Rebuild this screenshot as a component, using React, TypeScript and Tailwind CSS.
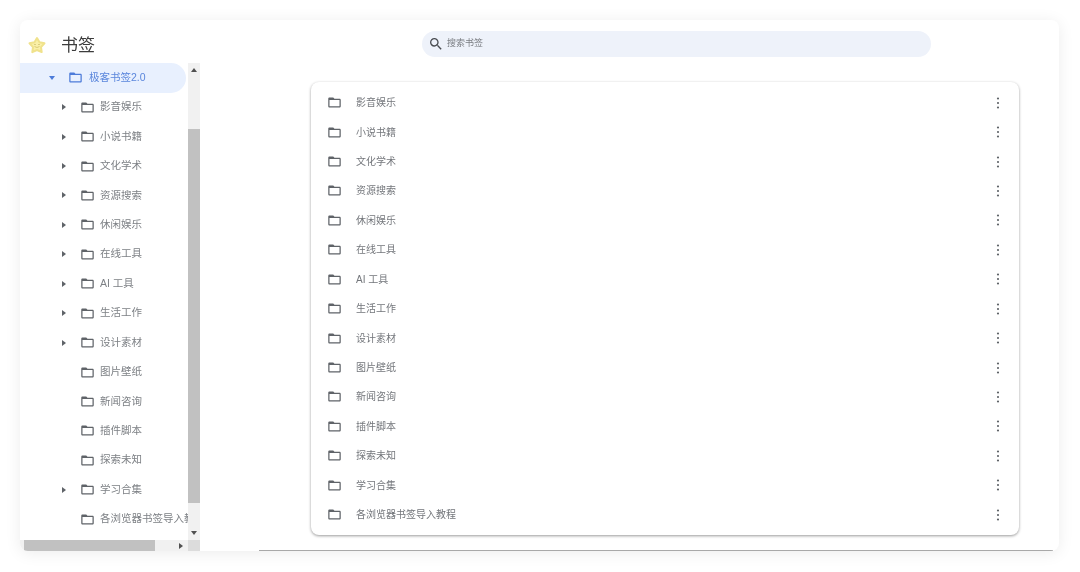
const folders = [
  { name: '影音娱乐', arrow: true },
  { name: '小说书籍', arrow: true },
  { name: '文化学术', arrow: true },
  { name: '资源搜索', arrow: true },
  { name: '休闲娱乐', arrow: true },
  { name: '在线工具', arrow: true },
  { name: 'AI 工具', arrow: true },
  { name: '生活工作', arrow: true },
  { name: '设计素材', arrow: true },
  { name: '图片壁纸', arrow: false },
  { name: '新闻咨询', arrow: false },
  { name: '插件脚本', arrow: false },
  { name: '探索未知', arrow: false },
  { name: '学习合集', arrow: true },
  { name: '各浏览器书签导入教程', arrow: false },
]

const FolderIcon = ({ color = '#5f6368' }: { color?: string }) => (
  <svg width="15" height="15" viewBox="0 0 24 24" fill={color} className="shrink-0">
    <path d="M20 6h-8l-2-2H4c-1.100 0-2 .9-2 2v12c0 1.100.9 2 2 2h16c1.100 0 2-.9 2-2V8c0-1.100-.9-2-2-2zm0 12H4V8h16v10z" />
  </svg>
)

const Star = () => (
  <svg width="20" height="19" viewBox="0 0 20 19">
    <path
      d="M10 2l2.500 4.300 5 1-3.500 3.800.7 5L10 14l-4.700 2.100.7-5-3.500-3.800 5-1z"
      fill="#faf0a8"
      stroke="#f0e28c"
      strokeWidth="2"
      strokeLinejoin="round"
    />
    <circle cx="8" cy="8.500" r=".6" fill="#b5a44e" />
    <circle cx="12" cy="8.500" r=".6" fill="#b5a44e" />
    <path d="M7.500 10.500q2.500 2 5 0" fill="none" stroke="#c4b258" strokeWidth=".6" />
  </svg>
)

const ArrowRight = ({ color = '#5f6368' }: { color?: string }) => (
  <svg width="4" height="6" viewBox="0 0 4 6" fill={color}>
    <path d="M0 0l4 3-4 3z" />
  </svg>
)

const ArrowDown = ({ color = '#505050' }: { color?: string }) => (
  <svg width="6" height="4" viewBox="0 0 6 4" fill={color}>
    <path d="M0 0h6L3 4z" />
  </svg>
)

const ArrowUp = () => (
  <svg width="6" height="4" viewBox="0 0 6 4" fill="#505050">
    <path d="M3 0l3 4H0z" />
  </svg>
)

const MoreIcon = () => (
  <svg width="16" height="16" viewBox="0 0 16 16" fill="#5f6368" className="shrink-0">
    <circle cx="8" cy="3.500" r="1.100" />
    <circle cx="8" cy="8" r="1.100" />
    <circle cx="8" cy="12.500" r="1.100" />
  </svg>
)

const App = () => {
  return (
    <div className="w-[1080px] h-[572px] bg-white pl-[20px] pt-[20px] overflow-hidden font-['Liberation_Sans','Noto_Sans_CJK_SC',sans-serif]">
      <div className="w-[1039px] h-[531px] bg-white rounded-lg shadow-[0_2px_16px_rgba(0,0,0,0.08)] flex flex-col overflow-hidden blur-[0.3px]">
        <div className="h-[43px] flex items-center shrink-0">
          <div className="w-[402px] flex items-center pl-[7px] pt-[7px]">
            <Star />
            <span className="ml-[14px] text-[17px] text-[#3c3c3c] mt-[2px]">书签</span>
          </div>
          <div className="w-[509px] h-[26px] mt-[4px] rounded-full bg-[#eef2fa] flex items-center pl-[6px]">
            <svg width="16" height="16" viewBox="0 0 24 24" fill="#4a4d52">
              <path d="M15.500 14h-.79l-.28-.27A6.471 6.471 0 0 0 16 9.500 6.500 6.500 0 1 0 9.500 16c1.610 0 3.090-.59 4.230-1.570l.27.280v.790l5 4.990L20.490 19l-4.990-5zm-6 0C7.010 14 5 11.990 5 9.500S7.010 5 9.500 5 14 7.010 14 9.500 11.990 14 9.500 14z" />
            </svg>
            <span className="ml-[3px] text-[9px] text-[#7a7d82]">搜索书签</span>
          </div>
        </div>

        <div className="flex flex-1 min-h-0">
          <div className="w-[180px] shrink-0 flex flex-col">
            <div className="flex flex-1 min-h-0">
              <div className="w-[168px] overflow-hidden">
                <div className="w-[166px] h-[29.500px] bg-[#e8f0fe] rounded-r-full flex items-center text-[#5a86dc]">
                  <span className="ml-[29px] w-[19px] flex shrink-0">
                    <ArrowDown color="#4c7bd9" />
                  </span>
                  <FolderIcon color="#4c7bd9" />
                  <span className="ml-[6px] text-[10.500px]">极客书签2.0</span>
                </div>
                {folders.map((f) => (
                  <div key={f.name} className="h-[29.430px] flex items-center whitespace-nowrap">
                    <span className="ml-[42px] w-[18px] flex shrink-0">{f.arrow && <ArrowRight />}</span>
                    <FolderIcon />
                    <span className="ml-[5px] text-[10.500px] text-[#7d8085]">{f.name}</span>
                  </div>
                ))}
              </div>
              <div className="w-[12px] bg-[#f1f1f1] flex flex-col">
                <div className="h-[14px] flex items-center justify-center">
                  <ArrowUp />
                </div>
                <div className="mt-[52px] h-[374px] bg-[#c1c1c1]" />
                <div className="mt-auto h-[14px] flex items-center justify-center">
                  <ArrowDown />
                </div>
              </div>
            </div>
            <div className="h-[11px] flex shrink-0">
              <div className="w-[168px] bg-[#f1f1f1] flex items-center">
                <div className="ml-[4px] w-[131px] h-full bg-[#c1c1c1]" />
                <span className="ml-auto mr-[5px] flex">
                  <ArrowRight color="#505050" />
                </span>
              </div>
              <div className="w-[12px] bg-[#dcdcdc]" />
            </div>
          </div>

          <div className="flex-1 flex flex-col min-w-0">
            <div className="flex-1 min-h-0 pt-[19px] pl-[111px]">
              <div className="w-[708px] h-[453px] bg-white rounded-lg shadow-[0_1px_3px_rgba(0,0,0,0.4)] pt-[6px]">
                {folders.map((f) => (
                  <div key={f.name} className="h-[29.430px] flex items-center pl-[16px] pr-[13px]">
                    <FolderIcon />
                    <span className="ml-[14px] text-[10px] text-[#73767b]">{f.name}</span>
                    <span className="ml-auto flex">
                      <MoreIcon />
                    </span>
                  </div>
                ))}
              </div>
            </div>
            <div className="ml-[59px] mr-[6px] h-px bg-[#a8a8a8] shrink-0" />
          </div>
        </div>
      </div>
    </div>
  )
}

export default App
